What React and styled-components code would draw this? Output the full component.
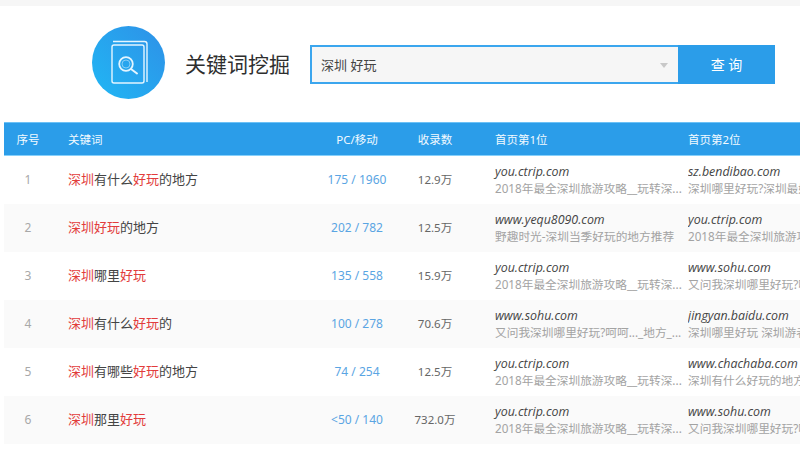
import styled, { createGlobalStyle } from "styled-components"

const rows = [
  { id: 1, kw: ["深圳", "有什么", "好玩", "的地方"], pc: "175 / 1960", count: "12.9万",
    first: ["you.ctrip.com", "2018年最全深圳旅游攻略__玩转深..."], second: ["sz.bendibao.com", "深圳哪里好玩?深圳最好玩的地方..."] },
  { id: 2, kw: ["深圳", "", "好玩", "的地方"], pc: "202 / 782", count: "12.5万",
    first: ["www.yequ8090.com", "野趣时光-深圳当季好玩的地方推荐"], second: ["you.ctrip.com", "2018年最全深圳旅游攻略__玩转深..."] },
  { id: 3, kw: ["深圳", "哪里", "好玩", ""], pc: "135 / 558", count: "15.9万",
    first: ["you.ctrip.com", "2018年最全深圳旅游攻略__玩转深..."], second: ["www.sohu.com", "又问我深圳哪里好玩?呵呵..._地方_..."] },
  { id: 4, kw: ["深圳", "有什么", "好玩", "的"], pc: "100 / 278", count: "70.6万",
    first: ["www.sohu.com", "又问我深圳哪里好玩?呵呵..._地方_..."], second: ["jingyan.baidu.com", "深圳哪里好玩 深圳游者必去的..."] },
  { id: 5, kw: ["深圳", "有哪些", "好玩", "的地方"], pc: "74 / 254", count: "12.5万",
    first: ["you.ctrip.com", "2018年最全深圳旅游攻略__玩转深..."], second: ["www.chachaba.com", "深圳有什么好玩的地方_深圳..."] },
  { id: 6, kw: ["深圳", "那里", "好玩", ""], pc: "<50 / 140", count: "732.0万",
    first: ["you.ctrip.com", "2018年最全深圳旅游攻略__玩转深..."], second: ["www.sohu.com", "又问我深圳哪里好玩?呵呵..._地方_..."] },
]

export default function App() {
  return (
    <Page>
      <GlobalStyle />
      <TopStrip />
      <Header>
        <Logo viewBox="0 0 73 73">
          <defs>
            <linearGradient id="logoFill" x1="0.1" y1="0.9" x2="0.9" y2="0.2">
              <stop offset="0" stopColor="#22b3f3" />
              <stop offset="1" stopColor="#2c96e9" />
            </linearGradient>
          </defs>
          <circle cx="36.5" cy="36.5" r="36.5" fill="url(#logoFill)" />
          <g fill="none" stroke="#e4f5ff" strokeWidth="1.4">
            <rect x="20" y="19" width="32" height="38" rx="2" />
            <path d="M21 15.5h31.5a2.5 2.5 0 0 1 2.5 2.500V56" />
            <circle cx="34" cy="38" r="6.800" strokeWidth="1.800" />
            <circle cx="34" cy="38" r="4" strokeWidth="1" opacity="0.5" />
            <path d="M39 43l6 4.500" strokeWidth="2" strokeLinecap="round" />
          </g>
        </Logo>
        <Title>关键词挖掘</Title>
        <SearchBox>
          <SearchField>
            深圳 好玩
            <Caret />
          </SearchField>
          <SearchButton>查 询</SearchButton>
        </SearchBox>
      </Header>
      <Table>
        <HeadRow>
          <SeqCell>序号</SeqCell>
          <KeywordCell>关键词</KeywordCell>
          <CenterCell>PC/移动</CenterCell>
          <CenterCell>收录数</CenterCell>
          <SiteCell>首页第1位</SiteCell>
          <SiteCell>首页第2位</SiteCell>
        </HeadRow>
        {rows.map((row) => (
          <Row key={row.id}>
            <SeqNumber>{row.id}</SeqNumber>
            <KeywordCell>
              <Hit>{row.kw[0]}</Hit>
              {row.kw[1]}
              <Hit>{row.kw[2]}</Hit>
              {row.kw[3]}
            </KeywordCell>
            <PcCell>{row.pc}</PcCell>
            <CountCell>{row.count}</CountCell>
            <SiteCell>
              <Domain>{row.first[0]}</Domain>
              <Snippet>{row.first[1]}</Snippet>
            </SiteCell>
            <SiteCell>
              <Domain>{row.second[0]}</Domain>
              <Snippet>{row.second[1]}</Snippet>
            </SiteCell>
          </Row>
        ))}
      </Table>
    </Page>
  )
}

const GlobalStyle = createGlobalStyle`
  html, body {
    margin: 0;
    background: #fff;
    overflow: hidden;
  }
`

const Page = styled.div`
  width: 800px;
  height: 454px;
  overflow: hidden;
  font-family: "Noto Sans", "Noto Sans CJK SC", sans-serif;
  color: #333;
`

const TopStrip = styled.div`
  height: 6px;
  background: #f6f6f6;
`

const Header = styled.div`
  display: flex;
  align-items: center;
  height: 116px;
  padding-left: 92px;
`

const Logo = styled.svg`
  width: 73px;
  height: 73px;
  flex: none;
  margin-top: -3px;
`

const Title = styled.div`
  width: 125px;
  margin-left: 20px;
  padding-bottom: 2px;
  font-size: 21px;
  line-height: 30px;
  color: #2e2e2e;
  font-family: "Noto Sans CJK SC", sans-serif;
  font-weight: 400;
`

const SearchBox = styled.div`
  display: flex;
  width: 465px;
  height: 39px;
  margin-top: 1px;
`

const SearchField = styled.div`
  position: relative;
  flex: 1;
  display: flex;
  align-items: center;
  padding-left: 9px;
  background: #f6f6f6;
  border: 2px solid #3ba6ee;
  border-right: none;
  font-size: 13px;
  color: #444;
`

const Caret = styled.span`
  position: absolute;
  right: 10px;
  top: 16px;
  width: 0;
  height: 0;
  border-left: 4.500px solid transparent;
  border-right: 4.500px solid transparent;
  border-top: 5px solid #c8c8c8;
`

const SearchButton = styled.div`
  width: 97px;
  display: flex;
  align-items: center;
  justify-content: center;
  padding-bottom: 2px;
  box-sizing: border-box;
  background: #2b9de9;
  color: #fff;
  font-size: 14px;
  white-space: pre;
`

const Table = styled.div`
  margin-left: 4px;
  width: 860px;
`

const Row = styled.div`
  display: grid;
  grid-template-columns: 48px 255px 100px 56px 225px 193px;
  height: 48px;
  align-items: center;
  font-size: 13px;
  &:nth-child(odd) {
    background: #fafafa;
  }
`

const HeadRow = styled(Row)`
  height: 32px;
  background: #2b9de9;
  border-top: 1px solid #6cc1f6;
  border-bottom: 1px solid #86d0fb;
  color: #f2faff;
  font-size: 11.500px;
  &:nth-child(odd) {
    background: #2b9de9;
  }
`

const SeqCell = styled.div`
  text-align: center;
`

const SeqNumber = styled(SeqCell)`
  padding-bottom: 2px;
  font-size: 12px;
  color: #a8a8a8;
`

const KeywordCell = styled.div`
  padding-left: 16px;
  padding-bottom: 3px;
  color: #444;
  ${HeadRow} & {
    color: inherit;
    padding-bottom: 0;
  }
`

const Hit = styled.span`
  color: #e23c3c;
`

const CenterCell = styled.div`
  text-align: center;
`

const PcCell = styled(CenterCell)`
  padding-bottom: 2px;
  font-size: 12px;
  color: #5aa5e3;
`

const CountCell = styled(CenterCell)`
  padding-bottom: 2px;
  font-size: 11.500px;
  color: #666;
`

const SiteCell = styled.div`
  min-width: 0;
  white-space: nowrap;
  overflow: hidden;
  &:nth-child(5) {
    padding-left: 32px;
  }
`

const Domain = styled.div`
  font-family: "Open Sans", "Noto Sans", sans-serif;
  font-style: italic;
  font-size: 12.400px;
  line-height: 17px;
  color: #444;
`

const Snippet = styled.div`
  font-size: 11.700px;
  line-height: 17px;
  color: #a3a3a3;
`
